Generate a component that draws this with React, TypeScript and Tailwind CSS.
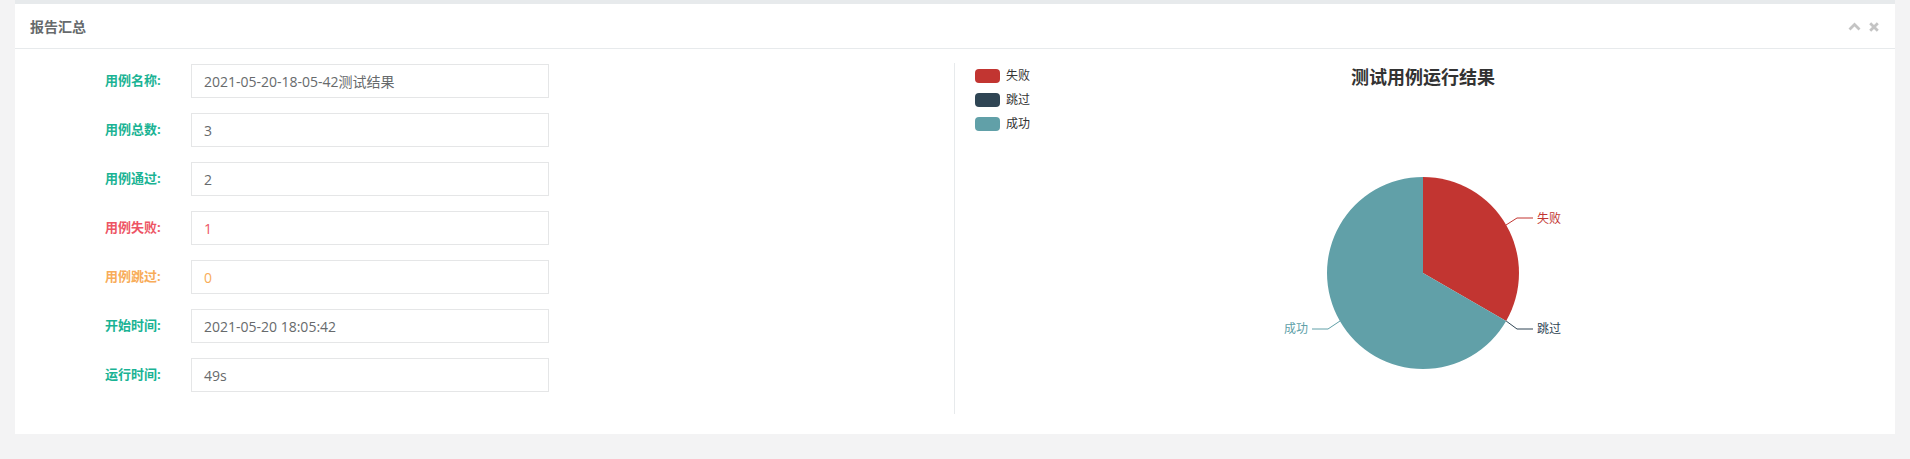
import React from "react";

const FONT = { fontFamily: '"Open Sans", "Noto Sans CJK SC", sans-serif' };

type Row = { label: string; value: string; labelClass: string; valueClass: string };

const rows: Row[] = [
  { label: "用例名称:", value: "2021-05-20-18-05-42测试结果", labelClass: "text-[#1ab394]", valueClass: "text-[#676a6c]" },
  { label: "用例总数:", value: "3", labelClass: "text-[#1ab394]", valueClass: "text-[#676a6c]" },
  { label: "用例通过:", value: "2", labelClass: "text-[#1ab394]", valueClass: "text-[#676a6c]" },
  { label: "用例失败:", value: "1", labelClass: "text-[#ed5565]", valueClass: "text-[#ed5565]" },
  { label: "用例跳过:", value: "0", labelClass: "text-[#f8ac59]", valueClass: "text-[#f8ac59]" },
  { label: "开始时间:", value: "2021-05-20 18:05:42", labelClass: "text-[#1ab394]", valueClass: "text-[#676a6c]" },
  { label: "运行时间:", value: "49s", labelClass: "text-[#1ab394]", valueClass: "text-[#676a6c]" },
];

function Chart() {
  const cx = 468;
  const cy = 210;
  const r = 96;
  const ex = cx + r * Math.sin((120 * Math.PI) / 180);
  const ey = cy - r * Math.cos((120 * Math.PI) / 180);
  const legend = [
    { name: "失败", color: "#c23531" },
    { name: "跳过", color: "#2f4554" },
    { name: "成功", color: "#61a0a8" },
  ];
  return (
    <svg width="925" height="351" viewBox="0 0 925 351" style={FONT}>
      {legend.map((l, i) => (
        <g key={l.name}>
          <rect x={20} y={6 + i * 24} width={25} height={14} rx={4} fill={l.color} />
          <text x={51} y={14 + i * 24} fontSize={12} fill="#333" dominantBaseline="middle">
            {l.name}
          </text>
        </g>
      ))}
      <text x={468} y={16} fontSize={18} fontWeight={700} fill="#333" textAnchor="middle" dominantBaseline="middle">
        测试用例运行结果
      </text>
      <path d={`M${cx},${cy} L${cx},${cy - r} A${r},${r} 0 0 1 ${ex},${ey} Z`} fill="#c23531" />
      <path d={`M${cx},${cy} L${ex},${ey} A${r},${r} 0 1 1 ${cx},${cy - r} Z`} fill="#61a0a8" />
      <polyline points="551,162 562,155 578,155" fill="none" stroke="#c23531" strokeWidth={1} />
      <text x={582} y={157} fontSize={12} fill="#c23531" dominantBaseline="middle">失败</text>
      <polyline points={`${ex},${ey} 562,266 578,266`} fill="none" stroke="#2f4554" strokeWidth={1} />
      <text x={582} y={267} fontSize={12} fill="#2f4554" dominantBaseline="middle">跳过</text>
      <polyline points="385,258 373,266 357,266" fill="none" stroke="#61a0a8" strokeWidth={1} />
      <text x={353} y={267} fontSize={12} fill="#61a0a8" textAnchor="end" dominantBaseline="middle">成功</text>
    </svg>
  );
}

export default function App() {
  return (
    <div className="min-h-[459px] bg-[#f3f3f4] px-[15px]" style={FONT}>
      <div className="bg-white border-t-4 border-[#e7eaec]">
        <div className="h-[45px] px-[15px] flex items-center justify-between border-b border-[#e7eaec]">
          <h5 className="text-[14px] font-semibold text-[#676a6c] pt-[1px]">报告汇总</h5>
          <div className="flex items-center gap-[8px] pr-[1px] pt-[1px]">
            <svg width="13" height="9" viewBox="0 0 13 9">
              <polyline points="1.5,7.5 6.5,2.5 11.5,7.5" fill="none" stroke="#c4c4c4" strokeWidth="2.8" />
            </svg>
            <svg width="10" height="10" viewBox="0 0 10 10">
              <path d="M1.2,1.2 L8.8,8.8 M8.8,1.2 L1.2,8.8" stroke="#c4c4c4" strokeWidth="2.8" />
            </svg>
          </div>
        </div>
        <div className="flex px-[15px] pt-[14px] pb-[20px]">
          <div className="w-[925px] border-r border-[#e7eaec] pt-[1px] pb-[22px]">
            {rows.map((row, i) => (
              <div key={i} className={`flex items-center h-[34px] ${i < rows.length - 1 ? "mb-[15px]" : ""}`}>
                <label className={`w-[86px] ml-[75px] text-[13px] font-bold ${row.labelClass}`}>{row.label}</label>
                <div className={`w-[358px] h-[34px] border border-[#e5e6e7] flex items-center px-[12px] text-[14px] ${row.valueClass}`}>
                  {row.value}
                </div>
              </div>
            ))}
          </div>
          <div className="flex-1 relative">
            <Chart />
          </div>
        </div>
      </div>
    </div>
  );
}
